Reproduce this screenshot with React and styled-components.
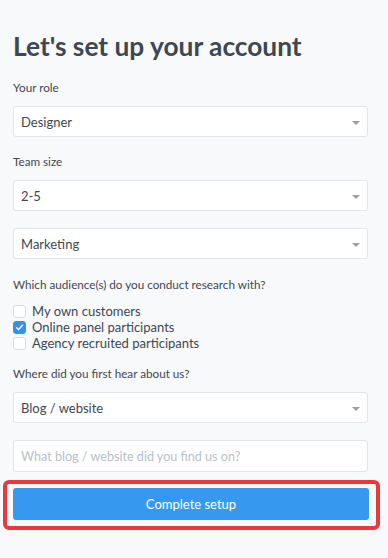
import React from 'react'
import styled, { createGlobalStyle } from 'styled-components'

const GlobalStyle = createGlobalStyle`
  html, body {
    margin: 0;
    padding: 0;
    background: #f8f9fb;
  }
  body {
    font-family: Lato, 'Noto Sans', sans-serif;
    color: #3d4852;
  }
`

const Page = styled.div`
  width: 355px;
  padding: 30px 20px 27px 13px;
  display: flex;
  flex-direction: column;
`

const Title = styled.h1`
  margin: 0 0 17px;
  font-size: 26.3px;
  line-height: 32px;
  font-weight: 700;
  color: #3d4852;
`

const Label = styled.div`
  font-size: 11.7px;
  line-height: 16px;
  color: #3d4852;
  margin-bottom: ${(p) => p.gap || 11}px;
`

const Field = styled.div`
  margin-bottom: ${(p) => p.gap ?? 16}px;
`

const SelectBox = styled.div`
  position: relative;
  height: 31px;
  box-sizing: border-box;
  border: 1px solid #e1e5ec;
  border-radius: 3px;
  background: #fff;
  display: flex;
  align-items: center;
  padding: 0 7px;
  font-size: 13px;
  color: #3d4852;
`

const Caret = styled.span`
  position: absolute;
  right: 7px;
  top: 14px;
  width: 0;
  height: 0;
  border-left: 4px solid transparent;
  border-right: 4px solid transparent;
  border-top: 4px solid #9a9fa6;
`

const TextInput = styled.input`
  height: 32px;
  box-sizing: border-box;
  width: 100%;
  border: 1px solid #e1e5ec;
  border-radius: 3px;
  background: #fff;
  padding: 0 7px;
  font-family: inherit;
  font-size: 12.6px;
  color: #3d4852;
  outline: none;
  &::placeholder {
    color: #b8c0c9;
  }
`

const CheckList = styled.div`
  display: flex;
  flex-direction: column;
  margin-bottom: 14px;
`

const CheckRow = styled.label`
  display: flex;
  align-items: center;
  gap: 6px;
  height: 16px;
  line-height: 16px;
  font-size: 13px;
  color: #3d4852;
`

const Box = styled.span`
  width: 13px;
  height: 13px;
  box-sizing: border-box;
  border-radius: 3px;
  border: 1px solid ${(p) => (p.checked ? '#3b8fe6' : '#d6dbe2')};
  background: ${(p) => (p.checked ? '#3b8fe6' : '#fff')};
  display: flex;
  align-items: center;
  justify-content: center;
`

const Highlight = styled.div`
  margin: 0 -12px 0 -10px;
  padding: 4px 7px 6px 6px;
  border: 4px solid #e9393b;
  border-radius: 6px;
`

const Button = styled.button`
  display: block;
  width: 100%;
  height: 32px;
  border: none;
  border-radius: 3px;
  background: #3699ef;
  color: #fff;
  font-family: inherit;
  font-size: 13px;
  cursor: pointer;
`

const Select = ({ value }) => (
  <SelectBox>
    {value}
    <Caret />
  </SelectBox>
)

const Check = ({ checked, children }) => (
  <CheckRow>
    <Box checked={checked}>
      {checked && (
        <svg width="9" height="9" viewBox="0 0 10 10">
          <path d="M1.8 5.2 L4 7.3 L8.3 2.6" fill="none" stroke="#fff" strokeWidth="1.6" strokeLinecap="round" strokeLinejoin="round" />
        </svg>
      )}
    </Box>
    {children}
  </CheckRow>
)

const App = () => {
  return (
    <Page>
      <GlobalStyle />
      <Title>Let's set up your account</Title>
      <Label>Your role</Label>
      <Field>
        <Select value="Designer" />
      </Field>
      <Label>Team size</Label>
      <Field gap={17}>
        <Select value="2-5" />
      </Field>
      <Field gap={17}>
        <Select value="Marketing" />
      </Field>
      <Label>Which audience(s) do you conduct research with?</Label>
      <CheckList>
        <Check>My own customers</Check>
        <Check checked>Online panel participants</Check>
        <Check>Agency recruited participants</Check>
      </CheckList>
      <Label>Where did you first hear about us?</Label>
      <Field gap={17}>
        <Select value="Blog / website" />
      </Field>
      <Field gap={8}>
        <TextInput placeholder="What blog / website did you find us on?" />
      </Field>
      <Highlight>
        <Button>Complete setup</Button>
      </Highlight>
    </Page>
  )
}

export default App
